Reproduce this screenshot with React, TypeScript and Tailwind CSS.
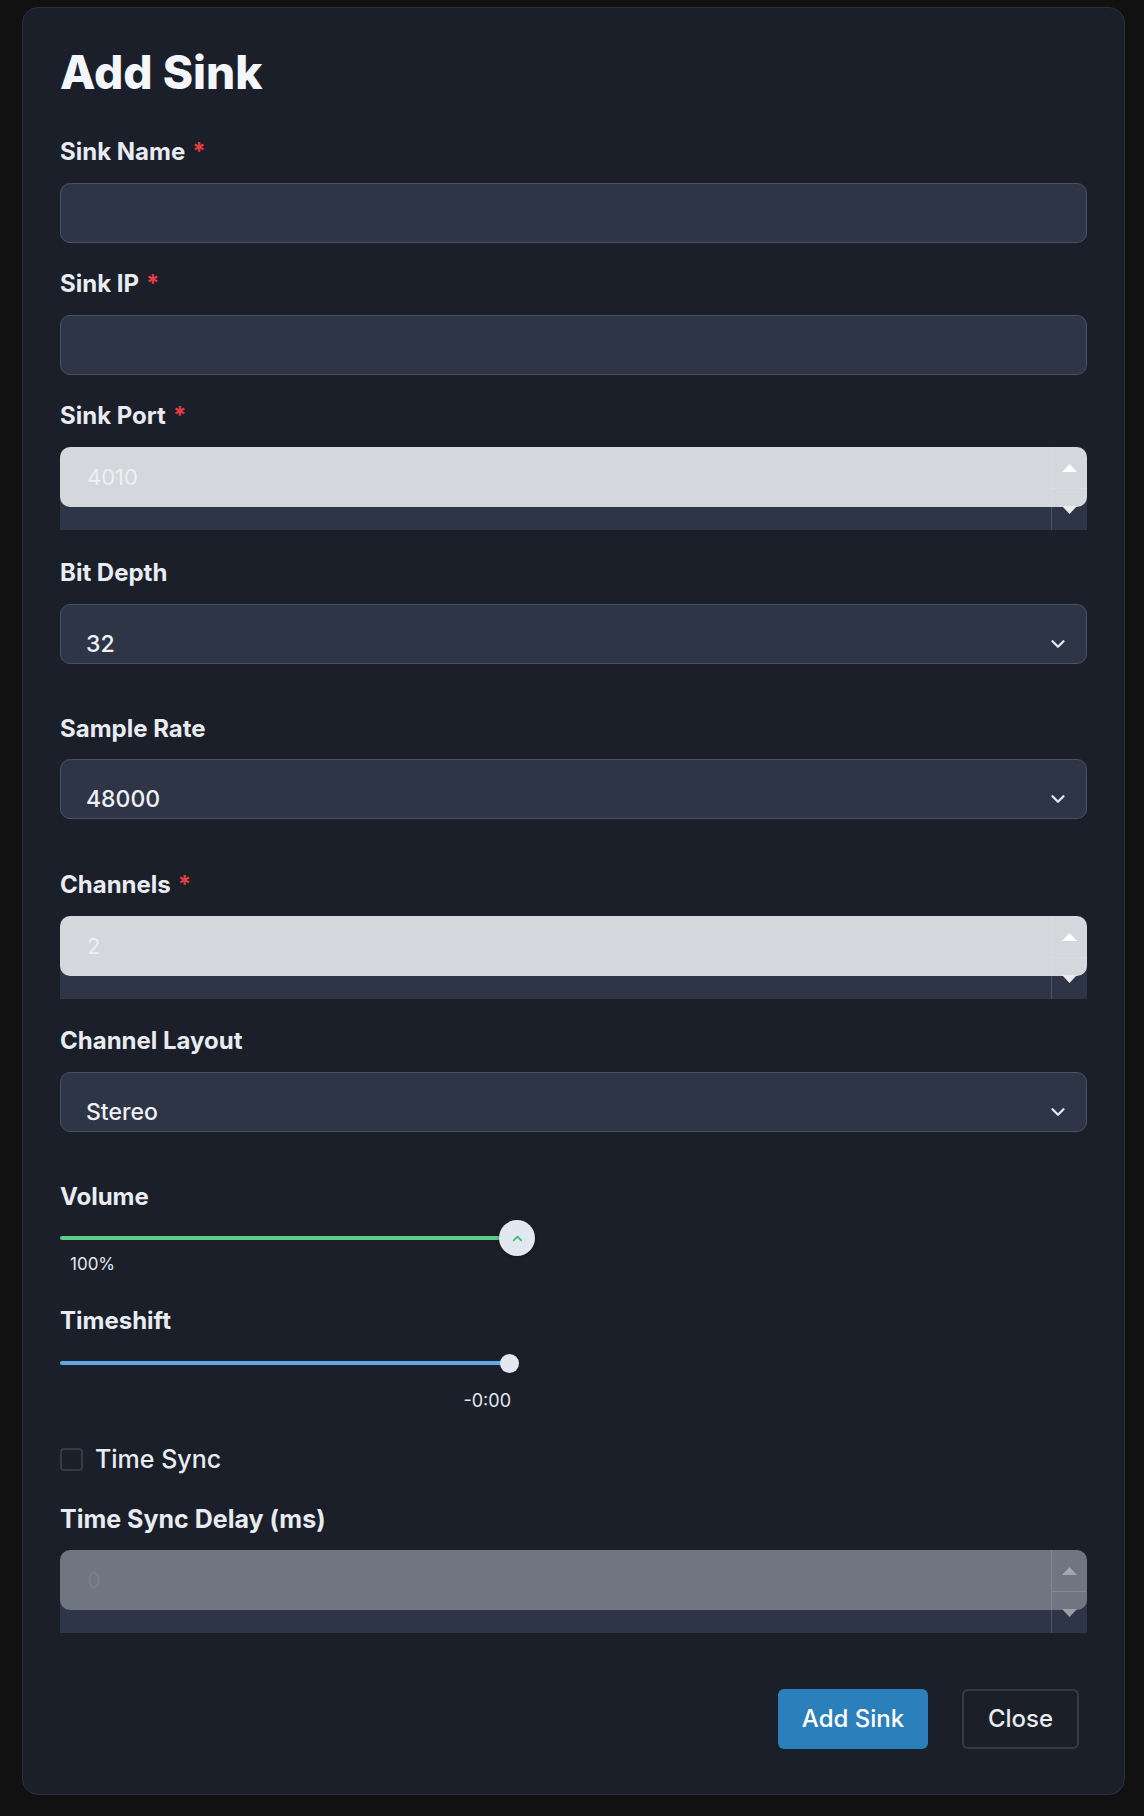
import * as React from 'react';
import { ChevronDown, ChevronUp } from 'lucide-react';

const FONT = { fontFamily: 'Inter, "Noto Sans", sans-serif' };

function Label({ text, required, className = '' }: { text: string; required?: boolean; className?: string }) {
  return (
    <div className={`h-[30px] text-[24px] leading-[30px] font-bold text-[#e8ecf1] ${className}`}>
      {text}
      {required && <span className="ml-[7px] text-[#e53e3e]">*</span>}
    </div>
  );
}

function TextField() {
  return <div className="h-[60px] rounded-[10px] border border-[#4a5163] bg-[#2e3546]" />;
}

function Triangle({ up, color }: { up?: boolean; color: string }) {
  return (
    <svg width="15" height="8" viewBox="0 0 15 8">
      <path d={up ? 'M7.5 0 L15 8 L0 8 Z' : 'M0 0 L15 0 L7.5 8 Z'} fill={color} />
    </svg>
  );
}

/** Number input: light field on top, stepper column spanning the whole box. */
function NumberField({ value, disabled }: { value: string; disabled?: boolean }) {
  return (
    <div className="relative h-[83px] bg-[linear-gradient(to_bottom,transparent_30px,#2e3546_30px)]">
      <div
        className={`flex h-[60px] items-center rounded-[10px] pl-[27px] text-[22px] ${
          disabled ? 'bg-[#6f7581] text-[#7a808b]' : 'bg-[#d4d7db] text-[#eef0f2]'
        }`}
      >
        {value}
      </div>
      <div className="absolute right-0 top-0 bottom-0 flex w-[36px] flex-col border-l border-white/15">
        <div className="flex flex-1 items-center justify-center border-b border-white/15">
          <Triangle up color={disabled ? '#a3a7ae' : '#ffffff'} />
        </div>
        <div className="flex flex-1 items-center justify-center">
          <Triangle color={disabled ? '#9a9ea6' : '#e9ebee'} />
        </div>
      </div>
    </div>
  );
}

function SelectField({ value }: { value: string }) {
  return (
    <div className="flex h-[60px] items-center justify-between rounded-[10px] border border-[#4a5163] bg-[#2e3546] pt-[20px] pl-[25px] pr-[17px]">
      <span className="text-[23px] font-medium text-[#eef1f5]">{value}</span>
      <ChevronDown size={22} strokeWidth={2.5} className="text-[#e2e8f0]" />
    </div>
  );
}

export default function App() {
  return (
    <div className="min-h-screen bg-[#111111] pt-[7px] pl-[22px]" style={FONT}>
      <div className="w-[1103px] rounded-[16px] border border-[#2a303b] bg-[#1b1f2a] px-[37px] pt-[35px] pb-[45px]">
        <h2 className="text-[46px] font-extrabold leading-[58px] text-[#f3f6fa]">Add Sink</h2>

        <Label text="Sink Name" required className="mt-[36px] mb-[16px]" />
        <TextField />

        <Label text="Sink IP" required className="mt-[26px] mb-[16px]" />
        <TextField />

        <Label text="Sink Port" required className="mt-[26px] mb-[16px]" />
        <NumberField value="4010" />

        <Label text="Bit Depth" className="mt-[28px] mb-[16px]" />
        <SelectField value="32" />

        <Label text="Sample Rate" className="mt-[50px] mb-[15px]" />
        <SelectField value="48000" />

        <Label text="Channels" required className="mt-[51px] mb-[16px]" />
        <NumberField value="2" />

        <Label text="Channel Layout" className="mt-[27px] mb-[16px]" />
        <SelectField value="Stereo" />

        <Label text="Volume" className="mt-[50px]" />
        <div className="relative mt-[8px] h-[36px] w-[476px]">
          <div className="absolute left-0 top-[16px] h-[4px] w-[457px] rounded-full bg-[#5ccb86]" />
          <div className="absolute left-[439px] top-0 flex h-[36px] w-[36px] items-center justify-center rounded-full bg-[#e2e8f0] shadow-[0_1px_3px_rgba(0,0,0,0.4)]">
            <ChevronUp size={15} strokeWidth={3} className="text-[#48bb78]" />
          </div>
        </div>
        <div className="ml-[10px] -mt-[3px] h-[22px] text-[17px] leading-[22px] text-[#e2e8f0]">100%</div>

        <Label text="Timeshift" className="mt-[31px]" />
        <div className="relative mt-[18px] h-[19px] w-[460px]">
          <div className="absolute left-0 top-[7px] h-[4px] w-[450px] rounded-full bg-[#5ea9e6]" />
          <div className="absolute left-[440px] top-0 h-[19px] w-[19px] rounded-full bg-[#e2e8f0]" />
        </div>
        <div className="mt-[17px] flex w-[451px] justify-end text-[18px] leading-[22px] text-[#e2e8f0]">-0:00</div>

        <label className="mt-[32px] flex items-center gap-[12px]">
          <span className="h-[23px] w-[23px] rounded-[4px] border-2 border-[#343a46]" />
          <span className="text-[25px] font-medium leading-[30px] text-[#e8ecf1]">Time Sync</span>
        </label>

        <div className="mt-[30px] mb-[16px] h-[30px] text-[25px] font-bold leading-[30px] text-[#e8ecf1]">
          Time Sync Delay (ms)
        </div>
        <NumberField value="0" disabled />

        <div className="mt-[56px] flex justify-end gap-[34px] pr-[8px]">
          <button className="h-[60px] w-[150px] rounded-[6px] bg-[#2b7fbb] text-[24px] font-medium text-white">
            Add Sink
          </button>
          <button className="h-[60px] w-[117px] rounded-[6px] border-2 border-[#363b46] text-[24px] font-medium text-[#e8ecf1]">
            Close
          </button>
        </div>
      </div>
    </div>
  );
}
